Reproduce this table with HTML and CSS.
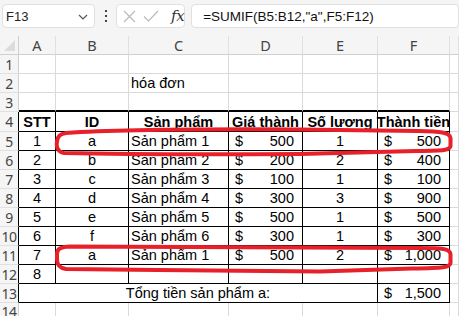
FILE: index.html
```html
<!DOCTYPE html>
<html lang="vi">
<head>
<meta charset="utf-8">
<title>SUMIF</title>
<link rel="stylesheet" href="styles.css">
</head>
<body>
<div class="toolbar">
  <div class="namebox">
    <span>F13</span>
    <svg class="chev" width="10" height="6" viewBox="0 0 10 6"><path d="M1 1 L5 5 L9 1" fill="none" stroke="#555" stroke-width="1.2"/></svg>
  </div>
  <div class="dots"><i></i><i></i><i></i></div>
  <div class="fxbox">
    <svg width="13" height="13" viewBox="0 0 13 13"><path d="M1 1 L12 12 M12 1 L1 12" stroke="#b8b8b8" stroke-width="1.1"/></svg>
    <svg width="16" height="12" viewBox="0 0 16 12"><path d="M1 6.5 L5.5 11 L15 1" fill="none" stroke="#b8b8b8" stroke-width="1.1"/></svg>
    <span class="fx">fx</span>
  </div>
  <div class="formula">=SUMIF(B5:B12,"a",F5:F12)</div>
</div>

<div class="sheet">
  <div class="c corner"><span class="tri"></span></div>
  <div class="c ch">A</div><div class="c ch">B</div><div class="c ch">C</div><div class="c ch">D</div><div class="c ch">E</div><div class="c ch">F</div><div class="c ch"></div>

  <div class="c rh">1</div><div class="c"></div><div class="c"></div><div class="c"></div><div class="c"></div><div class="c"></div><div class="c"></div><div class="c"></div>
  <div class="c rh">2</div><div class="c"></div><div class="c"></div><div class="c">hóa đơn</div><div class="c"></div><div class="c"></div><div class="c"></div><div class="c"></div>
  <div class="c rh">3</div><div class="c tb"></div><div class="c tb"></div><div class="c tb"></div><div class="c tb"></div><div class="c tb"></div><div class="c tb"></div><div class="c"></div>

  <div class="c rh bl">4</div><div class="c k ctr bold">STT</div><div class="c k ctr bold">ID</div><div class="c k ctr bold">Sản phẩm</div><div class="c k ctr bold">Giá thành</div><div class="c k ctr bold">Số lương</div><div class="c k ctr bold">Thành tiền</div><div class="c"></div>

  <div class="c rh bl">5</div><div class="c k ctr">1</div><div class="c k ctr">a</div><div class="c k">Sản phẩm 1</div><div class="c k acc"><span>$</span><span>500</span></div><div class="c k ctr">1</div><div class="c k acc"><span>$</span><span>500</span></div><div class="c"></div>
  <div class="c rh bl">6</div><div class="c k ctr">2</div><div class="c k ctr">b</div><div class="c k">Sản phẩm 2</div><div class="c k acc"><span>$</span><span>200</span></div><div class="c k ctr">2</div><div class="c k acc"><span>$</span><span>400</span></div><div class="c"></div>
  <div class="c rh bl">7</div><div class="c k ctr">3</div><div class="c k ctr">c</div><div class="c k">Sản phẩm 3</div><div class="c k acc"><span>$</span><span>100</span></div><div class="c k ctr">1</div><div class="c k acc"><span>$</span><span>100</span></div><div class="c"></div>
  <div class="c rh bl">8</div><div class="c k ctr">4</div><div class="c k ctr">d</div><div class="c k">Sản phẩm 4</div><div class="c k acc"><span>$</span><span>300</span></div><div class="c k ctr">3</div><div class="c k acc"><span>$</span><span>900</span></div><div class="c"></div>
  <div class="c rh bl">9</div><div class="c k ctr">5</div><div class="c k ctr">e</div><div class="c k">Sản phẩm 5</div><div class="c k acc"><span>$</span><span>500</span></div><div class="c k ctr">1</div><div class="c k acc"><span>$</span><span>500</span></div><div class="c"></div>
  <div class="c rh bl">10</div><div class="c k ctr">6</div><div class="c k ctr">f</div><div class="c k">Sản phẩm 6</div><div class="c k acc"><span>$</span><span>300</span></div><div class="c k ctr">1</div><div class="c k acc"><span>$</span><span>300</span></div><div class="c"></div>
  <div class="c rh bl">11</div><div class="c k ctr">7</div><div class="c k ctr">a</div><div class="c k">Sản phẩm 1</div><div class="c k acc"><span>$</span><span>500</span></div><div class="c k ctr">2</div><div class="c k acc"><span>$</span><span>1,000</span></div><div class="c"></div>
  <div class="c rh bl">12</div><div class="c k ctr">8</div><div class="c k"></div><div class="c k"></div><div class="c k"></div><div class="c k"></div><div class="c k"></div><div class="c"></div>

  <div class="c rh bl">13</div><div class="c k ctr span5">Tổng tiền sản phẩm a:</div><div class="c k acc"><span>$</span><span>1,500</span></div><div class="c"></div>
  <div class="c rh">14</div><div class="c"></div><div class="c"></div><div class="c"></div><div class="c"></div><div class="c"></div><div class="c"></div><div class="c"></div>
</div>

<svg class="marks" width="459" height="316" viewBox="0 0 459 316">
  <path d="M64 153 C57 152 56 146 57 141 C58 136 60 134 66 133 C110 130 200 129 300 129.5 L418 131 C440 131.5 450 132 450.5 138 L450.5 146 C450 150.5 444 150.5 416 151 L300 154 C200 154.5 110 154 64 153 Z" fill="none" stroke="#e8202a" stroke-width="4" stroke-linejoin="round"/>
  <path d="M66 269 C59 268 57 265 57 259 L57 254 C57 249 60 247 70 246.5 C120 246 200 246.5 300 247.5 L420 248 C442 248 450 248.5 450.5 254 L450.5 263 C450 267.5 444 268 412 268.5 L320 271.5 C250 271 150 270 66 269 Z" fill="none" stroke="#e8202a" stroke-width="4" stroke-linejoin="round"/>
</svg>
</body>
</html>
```

FILE: styles.css
```css
* { box-sizing: border-box; }

html, body {
  margin: 0;
  padding: 0;
  width: 459px;
  height: 316px;
  overflow: hidden;
  background: #ffffff;
}

body {
  position: relative;
  font-family: "Liberation Sans", Arial, sans-serif;
  color: #000;
}

.toolbar {
  height: 36px;
  background: #f5f5f5;
  display: flex;
  align-items: flex-start;
  padding: 4px 0 0 2px;
  font-family: "Liberation Sans", Arial, sans-serif;
}

.namebox {
  width: 97px;
  height: 24px;
  background: #fff;
  border: 1px solid #e1e1e1;
  border-radius: 4px;
  display: flex;
  align-items: center;
  justify-content: space-between;
  padding: 0 6px 0 3px;
  font-size: 13px;
  color: #222;
}

.chev { margin-top: 1px; }

.dots {
  width: 22px;
  height: 24px;
  display: flex;
  flex-direction: column;
  align-items: center;
  justify-content: center;
  gap: 3px;
}

.dots i {
  display: block;
  width: 2px;
  height: 2px;
  background: #444;
}

.fxbox {
  width: 72px;
  height: 24px;
  background: #fff;
  border: 1px solid #e1e1e1;
  border-radius: 4px;
  display: flex;
  align-items: center;
  padding: 0 0 0 6px;
  gap: 7px;
}

.fx {
  font-family: "DejaVu Serif", "Liberation Serif", serif;
  font-style: italic;
  font-size: 15px;
  color: #333;
  margin-left: 5px;
  letter-spacing: -0.5px;
}

.formula {
  margin-left: 6px;
  width: 280px;
  height: 24px;
  background: #fff;
  border: 1px solid #e1e1e1;
  border-radius: 4px;
  display: flex;
  align-items: center;
  padding-left: 11px;
  font-size: 13.5px;
  color: #111;
  white-space: nowrap;
}

.sheet {
  display: grid;
  grid-template-columns: 19px 37px 73px 100px 74px 75px 72px 1fr;
  grid-template-rows: 19px 19px 19px 19px 20px repeat(9, 19px) 1fr;
  height: 280px;
}

.c {
  border-right: 1px solid #dadada;
  border-bottom: 1px solid #dadada;
  font-size: 14.5px;
  line-height: 17px;
  display: flex;
  align-items: flex-end;
  padding: 0 2px;
  white-space: nowrap;
  overflow: visible;
}

.ch {
  background: #f5f5f5;
  justify-content: center;
  align-items: center;
  font-family: "Noto Sans", "Liberation Sans", sans-serif;
  font-size: 14.5px;
  color: #444;
  border-bottom-color: #d0d0d0;
  border-right-color: #e0e0e0;
}

.corner {
  background: #f5f5f5;
  position: relative;
  border-bottom-color: #d0d0d0;
  border-right-color: #d0d0d0;
}

.tri {
  position: absolute;
  right: 3px;
  bottom: 3px;
  width: 0;
  height: 0;
  border-left: 11px solid transparent;
  border-bottom: 11px solid #dcdcdc;
}

.rh {
  background: #f5f5f5;
  justify-content: center;
  align-items: center;
  padding: 0;
  font-family: "Noto Sans", "Liberation Sans", sans-serif;
  font-size: 14px;
  letter-spacing: -0.5px;
  color: #444;
  border-right-color: #d0d0d0;
  border-bottom-color: #e0e0e0;
}

.bl { border-right-color: #000; }

.k {
  border-right-color: #000;
  border-bottom-color: #000;
}

.tb {
  border-bottom: 2px solid #000;
}

.ctr { justify-content: center; }
.bold { font-weight: bold; }

.acc {
  justify-content: space-between;
  padding: 0 8px 0 6px;
}

.span5 { grid-column: span 5; }

.marks {
  position: absolute;
  left: 0;
  top: 0;
  pointer-events: none;
}
```
